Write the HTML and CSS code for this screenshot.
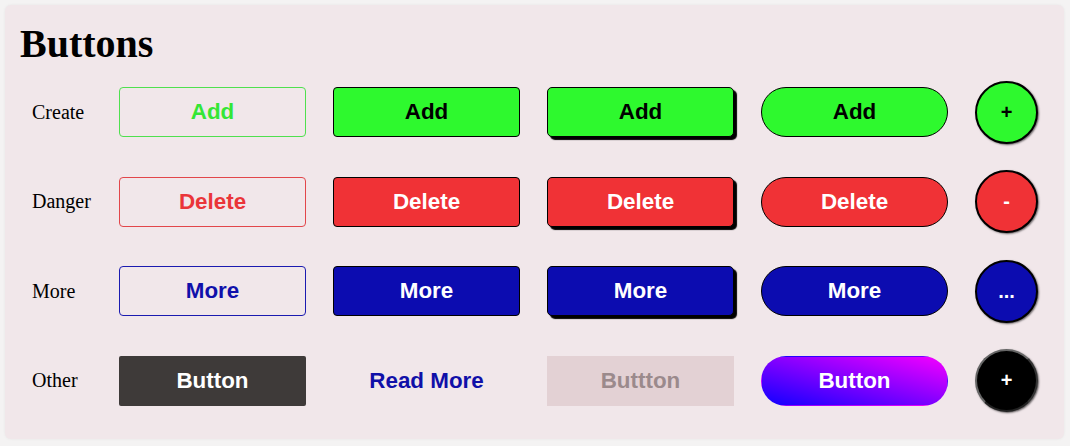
FILE: index.html
```html
<!DOCTYPE html>
<html lang="en">
<head>
<meta charset="utf-8">
<title>Buttons</title>
<link rel="stylesheet" href="styles.css">
</head>
<body>
<main class="card">
  <h1 class="title">Buttons</h1>
  <div class="grid">
    <span class="label">Create</span>
    <button class="btn outline green">Add</button>
    <button class="btn solid green">Add</button>
    <button class="btn solid green shadow">Add</button>
    <button class="btn solid green pill">Add</button>
    <button class="circle green">+</button>

    <span class="label">Danger</span>
    <button class="btn outline red">Delete</button>
    <button class="btn solid red">Delete</button>
    <button class="btn solid red shadow">Delete</button>
    <button class="btn solid red pill">Delete</button>
    <button class="circle red">-</button>

    <span class="label">More</span>
    <button class="btn outline blue">More</button>
    <button class="btn solid blue">More</button>
    <button class="btn solid blue shadow">More</button>
    <button class="btn solid blue pill">More</button>
    <button class="circle blue">...</button>

    <span class="label">Other</span>
    <button class="btn dark">Button</button>
    <button class="btn link">Read More</button>
    <button class="btn disabled">Buttton</button>
    <button class="btn gradient">Button</button>
    <button class="circle black">+</button>
  </div>
</main>
</body>
</html>
```
FILE: styles.css
```css
html, body {
  margin: 0;
  padding: 0;
}
body {
  background: #f4f3f3;
  padding: 5px 6px 9px 5px;
  font-family: "Liberation Serif", serif;
}
.card {
  background: #f1e7ea;
  border-radius: 6px;
  padding: 17px 15px 27px 15px;
  box-shadow: 0 0 3px rgba(0, 0, 0, 0.06);
}
.title {
  margin: 0 0 15px 0;
  font-size: 40px;
  line-height: 44px;
  font-weight: bold;
  color: #000;
}
.grid {
  display: grid;
  grid-template-columns: 72px 187px 187px 187px 187px 63px;
  grid-auto-rows: 62px;
  column-gap: 27px;
  row-gap: 27.5px;
  align-items: center;
}
.label {
  padding-left: 12px;
  font-size: 20px;
  color: #000;
}
.btn {
  height: 50px;
  width: 187px;
  box-sizing: border-box;
  font-family: "Liberation Sans", Arial, sans-serif;
  font-weight: bold;
  font-size: 22.4px;
  border: 1px solid transparent;
  border-radius: 4px;
  padding: 0;
  background: none;
  cursor: pointer;
}
.outline.green { border-color: #4fe04f; color: #35e635; }
.outline.red { border-color: #e2464a; color: #ea3539; }
.outline.blue { border-color: #1b1bb0; color: #1010aa; }

.solid { border-color: #000; }
.solid.green { background: #2ef92e; color: #000; }
.solid.red { background: #f03236; color: #fff; }
.solid.blue { background: #0c0cb0; color: #fff; }
.shadow { box-shadow: 3px 3px 1px #000; border-radius: 5px; }
.pill { border-radius: 25px; }

.dark {
  background: #3e3a39;
  color: #fff;
  border-radius: 2px;
}
.link {
  color: #1010a8;
}
.disabled {
  background: #e3d1d4;
  color: #9b8a8c;
  border-radius: 0;
}
.gradient {
  background: linear-gradient(to top right, #1000ff, #f500ff);
  color: #fff;
  border-radius: 25px;
}

.circle {
  width: 63px;
  height: 63px;
  box-sizing: border-box;
  border-radius: 50%;
  border: 2px solid #000;
  box-shadow: 1px 1px 2px rgba(0, 0, 0, 0.6);
  font-family: "Liberation Sans", Arial, sans-serif;
  font-weight: bold;
  font-size: 20px;
  padding: 0;
  cursor: pointer;
}
.circle.green { background: #2ef92e; color: #000; }
.circle.red { background: #f03236; color: #fff; }
.circle.blue { background: #0c0cb0; color: #fff; }
.circle.black {
  background: #000;
  color: #fff;
  border: 2px solid #666;
  border-bottom-color: #222;
  border-right-color: #333;
}
```
